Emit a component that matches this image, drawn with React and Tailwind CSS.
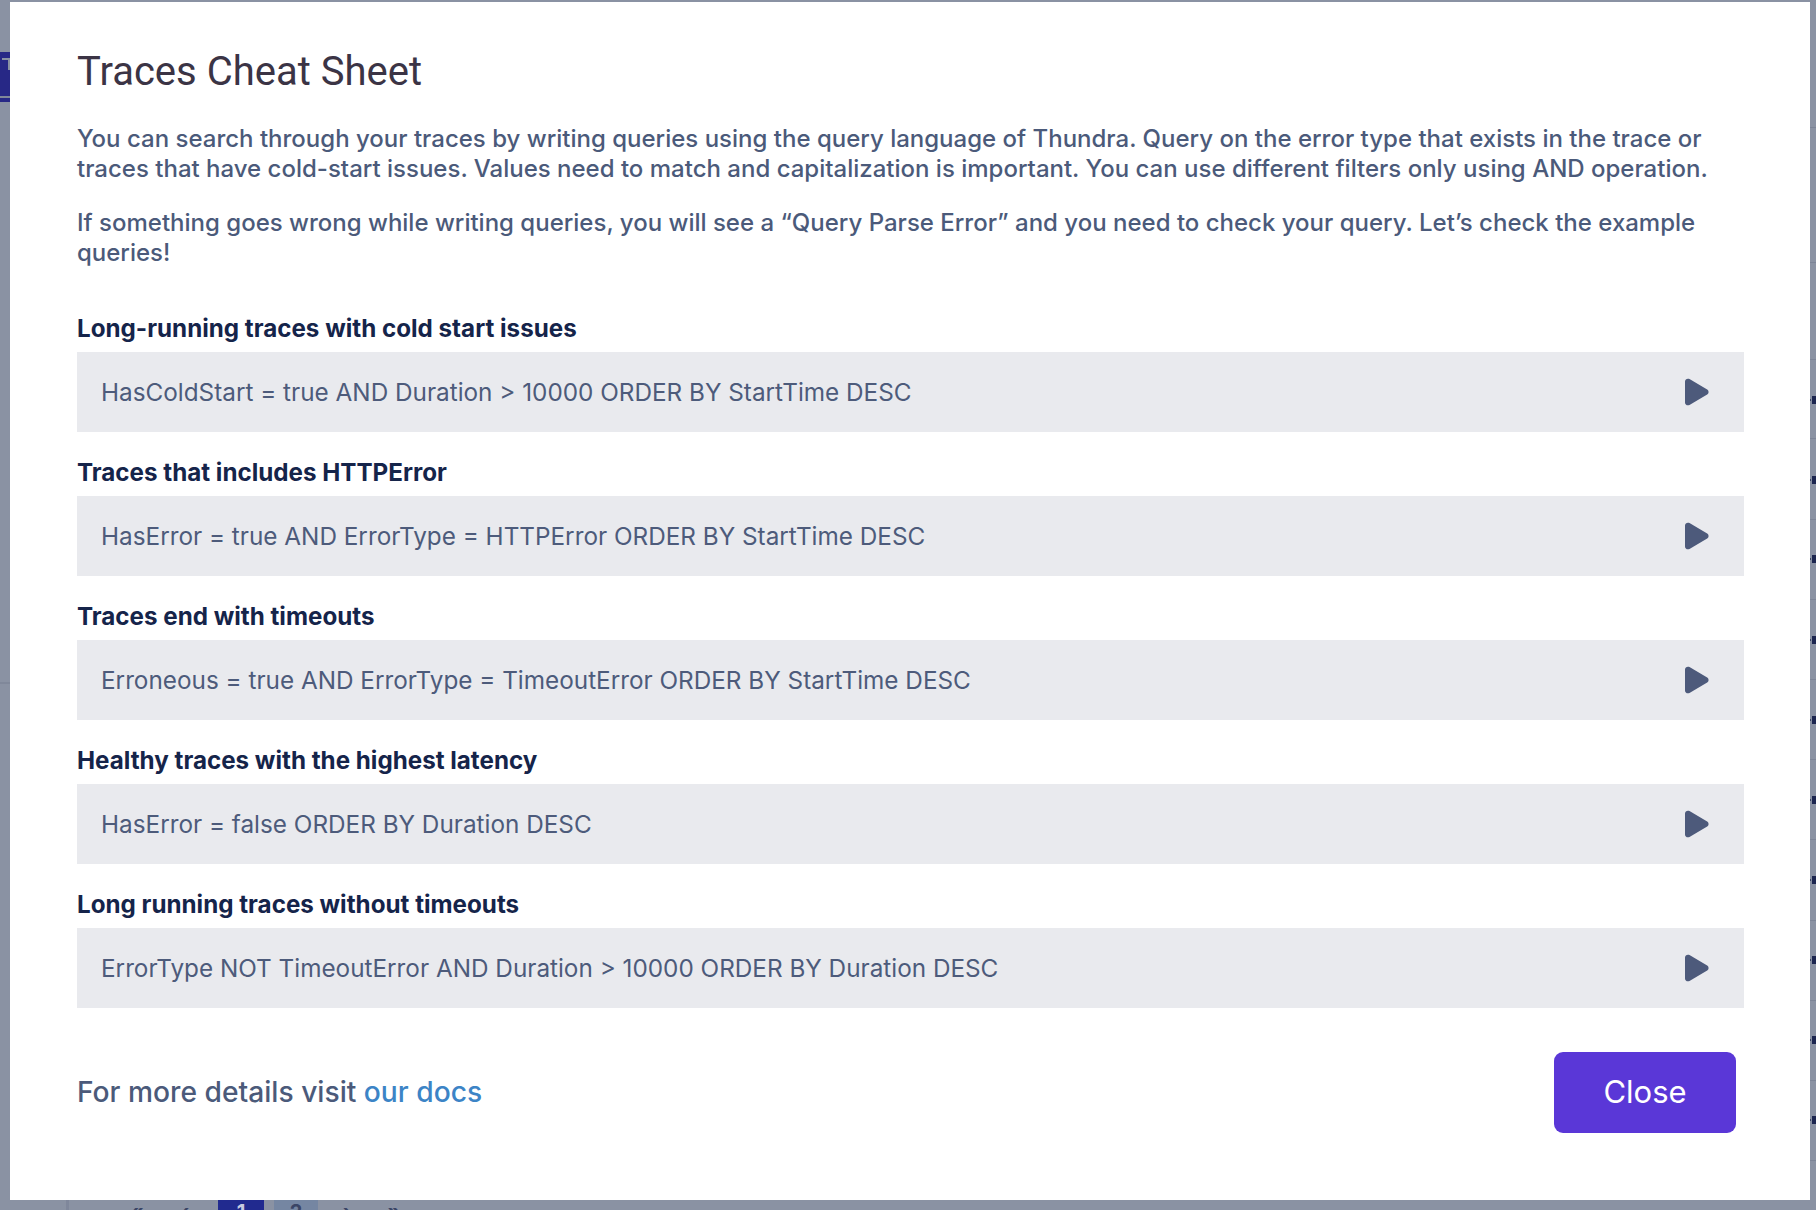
import React from 'react';

const EXAMPLES = [
  { title: 'Long-running traces with cold start issues', query: 'HasColdStart = true AND Duration > 10000 ORDER BY StartTime DESC' },
  { title: 'Traces that includes HTTPError', query: 'HasError = true AND ErrorType = HTTPError ORDER BY StartTime DESC' },
  { title: 'Traces end with timeouts', query: 'Erroneous = true AND ErrorType = TimeoutError ORDER BY StartTime DESC' },
  { title: 'Healthy traces with the highest latency', query: 'HasError = false ORDER BY Duration DESC' },
  { title: 'Long running traces without timeouts', query: 'ErrorType NOT TimeoutError AND Duration > 10000 ORDER BY Duration DESC' },
];

const ROW_MARKS = [400, 480, 559, 640, 720, 800, 880, 960, 1040, 1120];
const ROW_LINES = [127, 262, 359, 438, 519, 599, 679, 759, 839, 920, 1000, 1080, 1160];

const PlayIcon = () => (
  <svg width="25" height="28" viewBox="0 0 25 28" className="shrink-0">
    <path
      d="M1 3.6C1 1.3 3.5 -0.1 5.5 1.1L23.2 11.5C25 12.6 25 15.4 23.2 16.5L5.5 26.9C3.5 28.1 1 26.7 1 24.4Z"
      fill="#4d5a7b"
    />
  </svg>
);

const QueryRow = ({ title, query }) => (
  <div className="flex flex-col">
    <h3 className="text-[24.2px] leading-[30px] font-bold text-[#15244a] mb-[8px]">{title}</h3>
    <div className="h-[80px] bg-[#e9eaee] flex items-center justify-between pl-[24px] pr-[35px] cursor-pointer">
      <span className="text-[24.3px] text-[#4d5b7b]">{query}</span>
      <PlayIcon />
    </div>
  </div>
);

// page behind the overlay – only slivers are visible
const Backdrop = () => (
  <>
    <div className="absolute left-0 top-[52px] w-[10px] h-[50px] bg-[#272886]" />
    <div className="absolute left-[2px] top-[58px] w-[6px] h-[2px] bg-[#8a92a3]" />
    <div className="absolute left-[8px] top-[58px] w-[2px] h-[12px] bg-[#8a92a3]" />
    <div className="absolute left-0 top-[96px] w-[10px] h-[2px] bg-[#80889a]" />
    <div className="absolute left-0 top-[682px] w-[10px] h-[2px] bg-[#80889a]" />
    {ROW_LINES.map((y) => (
      <div key={y} className="absolute left-[1810px] w-[6px] h-[1px] bg-[#7c8497]" style={{ top: y }} />
    ))}
    {ROW_MARKS.map((y) => (
      <div key={y} className="absolute left-[1810px] flex items-center gap-[1px]" style={{ top: y - 4 }}>
        <div className="w-[1px] h-[2px] bg-[#3b4464]" />
        <div className="w-[4px] h-[8px] bg-[#1c2650]" />
      </div>
    ))}
    {/* pagination peeking under the modal */}
    <div className="absolute left-[66px] top-[1192px] flex items-start h-[40px] text-[20px] leading-[40px] font-bold text-[#3a4566]">
      <div className="w-[3px] h-[40px] bg-[#7f879b]" />
      <span className="ml-[58px] w-[20px] text-center">«</span>
      <span className="ml-[28px] w-[20px] text-center">‹</span>
      <div className="ml-[23px] w-[46px] h-[40px] bg-[#212a8f] text-center text-[#c8cbe0]">1</div>
      <div className="ml-[10px] w-[44px] h-[40px] bg-[#7586a2] text-center">2</div>
      <span className="ml-[19px] w-[20px] text-center">›</span>
      <span className="ml-[27px] w-[20px] text-center">»</span>
    </div>
  </>
);

export default function App() {
  return (
    <div className="relative w-full h-[1210px] overflow-hidden bg-[#8a92a3] font-['Inter',sans-serif]">
      <Backdrop />

      <div className="absolute left-[10px] top-[2px] w-[1800px] h-[1198px] bg-white pt-[46px] pl-[67px] pr-[66px] flex flex-col">
        <h2 className="font-['Roboto',sans-serif] text-[40px] leading-[48px] text-[#3b3445]">Traces Cheat Sheet</h2>

        <p className="mt-[28px] text-[24px] leading-[30px] font-medium text-[#4b5a7a]">
          You can search through your traces by writing queries using the query language of Thundra. Query on the error type that exists in the trace or traces that have cold-start issues. Values need to match and capitalization is important. You can use different filters only using AND operation.
        </p>
        <p className="mt-[24px] text-[24px] leading-[30px] font-medium text-[#4b5a7a]">
          If something goes wrong while writing queries, you will see a “Query Parse Error” and you need to check your query. Let’s check the example queries!
        </p>

        <div className="mt-[46px] flex flex-col gap-[26px]">
          {EXAMPLES.map((ex) => (
            <QueryRow key={ex.title} {...ex} />
          ))}
        </div>

        <div className="mt-[44px] flex items-center justify-between pr-[8px]">
          <p className="text-[28.2px] font-medium text-[#4b5a7a]">
            For more details visit <a href="#" className="text-[#3c84c6]">our docs</a>
          </p>
          <button className="w-[182px] h-[81px] rounded-[9px] bg-[#5a37d7] text-white text-[31px]">Close</button>
        </div>
      </div>
    </div>
  );
}
